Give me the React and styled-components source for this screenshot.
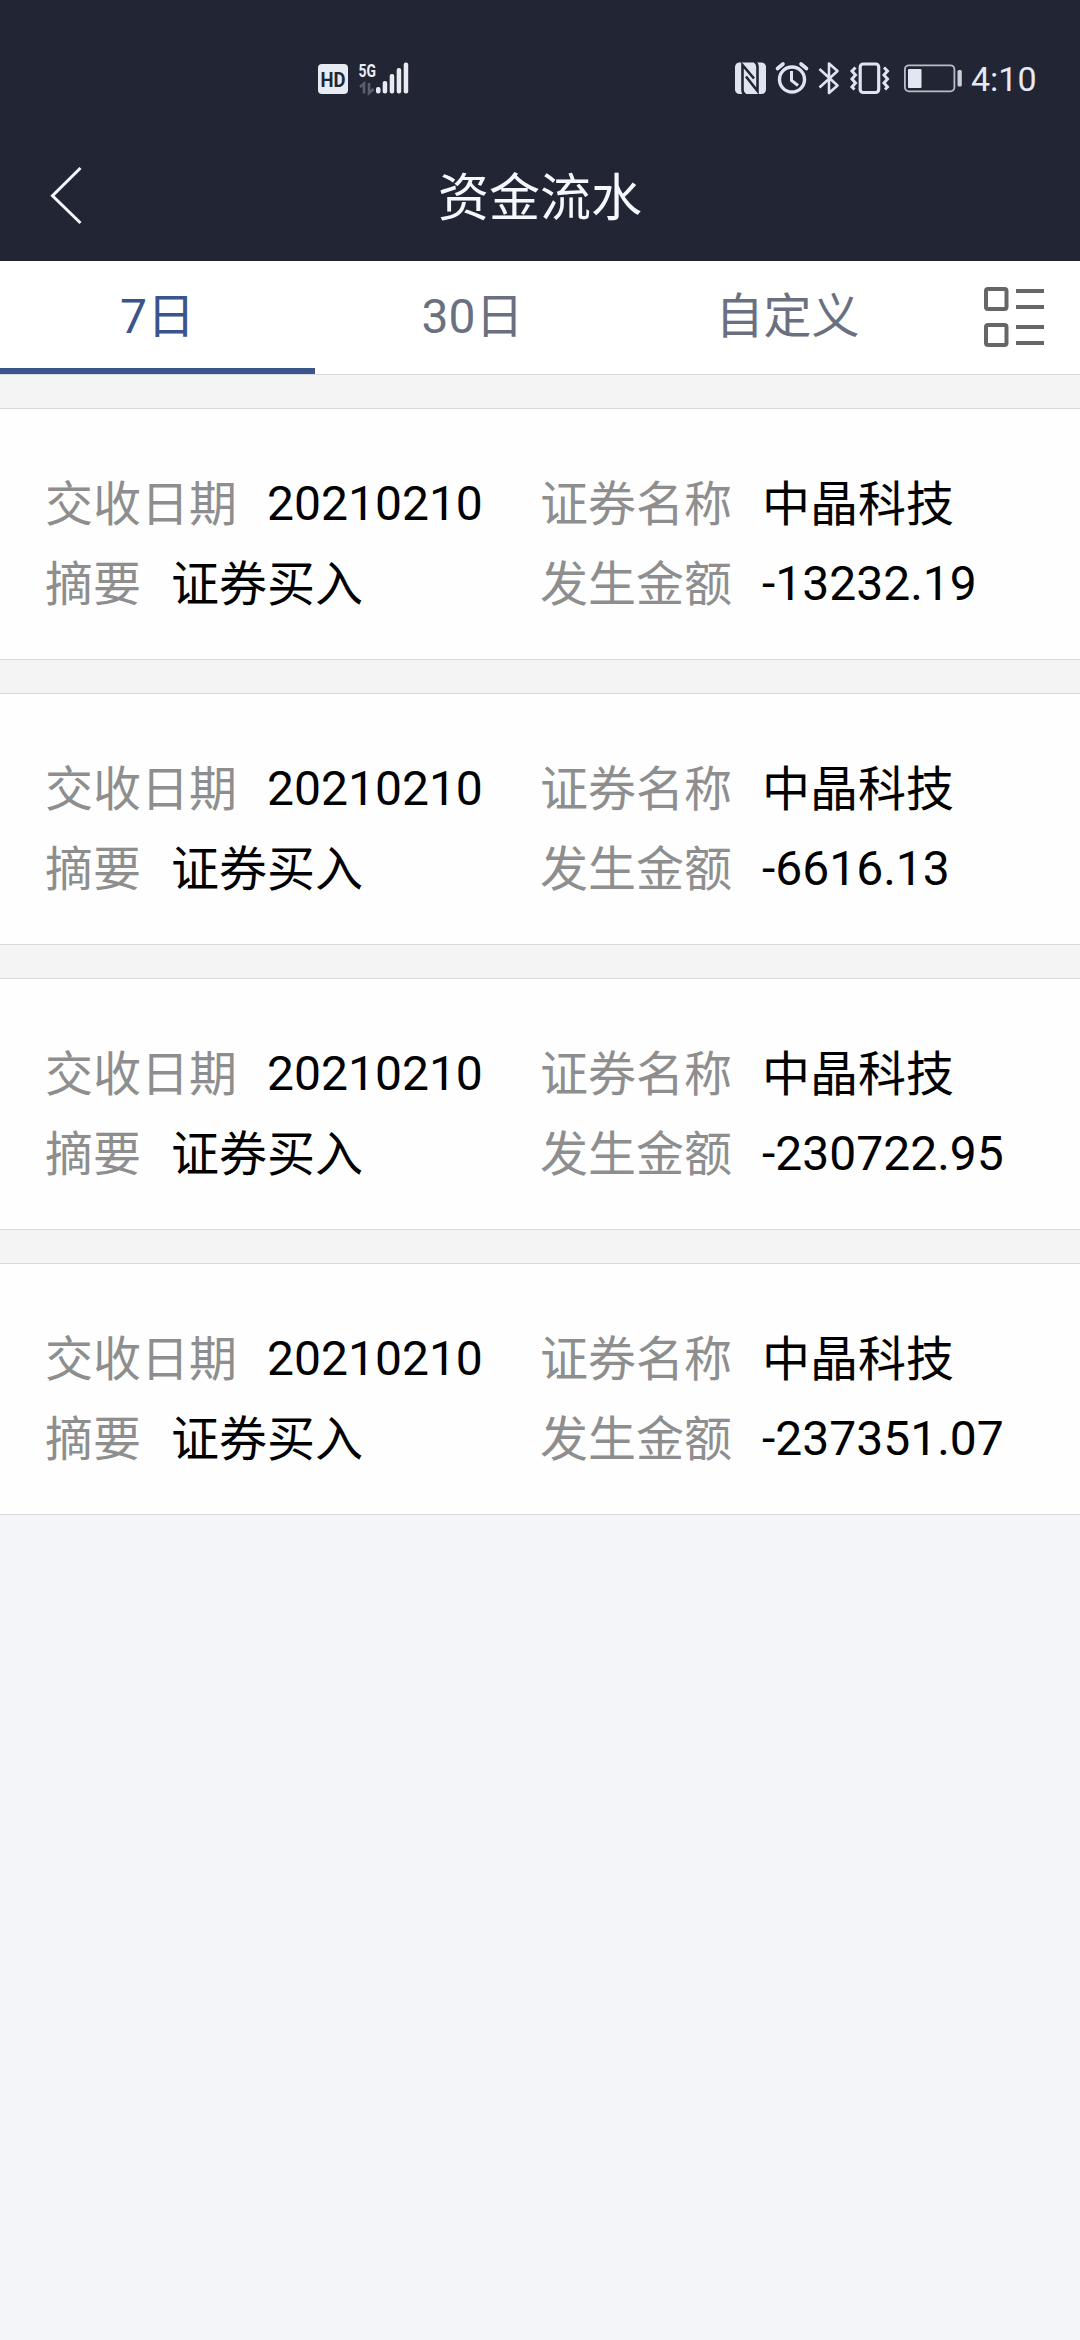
import React from 'react';
import styled, { css, createGlobalStyle } from 'styled-components';

const GlobalStyle = createGlobalStyle`
    * {
        box-sizing: border-box;
    }

    body {
        margin: 0;
        background-color: #f3f5f9;
        font-family: Roboto, "Noto Sans CJK SC", sans-serif;
        -webkit-font-smoothing: antialiased;
    }
`;

const Page = styled.div`
    width: 1080px;
    min-height: 2340px;
    background-color: #f3f5f9;
`;

const TopArea = styled.header`
    height: 261px;
    background-color: #222634;
    color: #f6f8ff;
`;

const StatusBar = styled.div`
    display: flex;
    justify-content: space-between;
    height: 131px;
    padding: 54px 43px 0 312px;
`;

const StatusGroup = styled.div`
    display: flex;
    height: 50px;
`;

const Clock = styled.span`
    width: 66px;
    color: #e6e9f5;
    font-size: 34px;
    line-height: 50px;
    white-space: nowrap;
`;

const TitleBar = styled.div`
    display: grid;
    grid-template-columns: 120px 1fr 120px;
    align-items: start;
    height: 130px;
`;

const BackButton = styled.button`
    display: flex;
    height: 130px;
    padding: 0;
    border: 0;
    background: none;
    color: inherit;
`;

const Title = styled.h1`
    margin: 0;
    padding-top: 3px;
    font-size: 51px;
    font-weight: 400;
    line-height: 130px;
    text-align: center;
`;

const TabBar = styled.nav`
    display: flex;
    height: 114px;
    background-color: #fff;
    border-bottom: 1px solid #d9dadd;
`;

const Tab = styled.button`
    width: 315px;
    height: 113px;
    padding: 5px 0 0;
    border: 0;
    border-bottom: 6px solid transparent;
    background: none;
    color: #6b7080;
    font-family: inherit;
    font-size: 48px;
    line-height: 102px;

    ${props => props.$active && css`
        border-bottom-color: #3b548c;
        color: #3b548c;
    `}
`;

const ListButton = styled.button`
    display: flex;
    flex: 1;
    padding: 0;
    border: 0;
    background: none;
    color: #666;
`;

const RecordList = styled.main`
    display: flex;
    flex-direction: column;
    gap: 33px;
    padding-top: 33px;
    background-color: #f4f4f5;
`;

const Record = styled.section`
    display: grid;
    grid-template-columns: 495px 1fr;
    grid-auto-rows: 80px;
    height: 252px;
    padding: 55px 0 0 45px;
    border-top: 1px solid #d8d8d8;
    border-bottom: 1px solid #d8d8d8;
    background-color: #fefefe;
`;

const Field = styled.div`
    display: flex;
    gap: 30px;
    font-size: 48px;
    line-height: 80px;
    white-space: nowrap;
`;

// Chinese glyphs sit slightly lower than the digits
const Label = styled.span`
    padding-top: 1px;
    color: #8e8e8e;
`;

const Value = styled.span`
    padding-top: ${props => props.$numeric ? 0 : 1}px;
    color: #000;
`;

const tabs = ['7日', '30日', '自定义'];

const records = [
    { date: '20210210', name: '中晶科技', summary: '证券买入', amount: '-13232.19' },
    { date: '20210210', name: '中晶科技', summary: '证券买入', amount: '-6616.13' },
    { date: '20210210', name: '中晶科技', summary: '证券买入', amount: '-230722.95' },
    { date: '20210210', name: '中晶科技', summary: '证券买入', amount: '-237351.07' },
];

// HD badge, 5G label and signal strength
function NetworkIcons() {
    return (
        <svg width="104" height="50" viewBox="312 54 104 50" fill="#e9ebf2">
            <rect x="318" y="64" width="30" height="30" rx="4" />
            <text x="320.5" y="86.5" fill="#222634" fontSize="20" fontWeight="700" textLength="25" lengthAdjust="spacingAndGlyphs">HD</text>
            <text x="358.5" y="77" fontSize="19" fontWeight="700" textLength="17.5" lengthAdjust="spacingAndGlyphs">5G</text>
            <g fill="none" stroke="#5b5f6b" strokeWidth="2.6">
                <path d="M360 87l4-3.500v10" />
                <path d="M369 83v10l4.500-4" />
            </g>
            <rect x="376" y="87" width="4.500" height="6.500" rx="2" />
            <rect x="382.700" y="81" width="4.500" height="12.500" rx="2" />
            <rect x="389.700" y="74" width="4.500" height="19.500" rx="2" />
            <rect x="396.700" y="68" width="4.500" height="25.500" rx="2" />
            <rect x="403.700" y="62.500" width="4.500" height="31" rx="2" />
        </svg>
    );
}

// NFC, alarm, bluetooth, vibrate and battery
function DeviceIcons() {
    return (
        <svg width="242" height="50" viewBox="729 54 242 50" fill="none" stroke="#dfe4f0" strokeWidth="3">
            <rect x="735" y="62.500" width="31" height="31.500" rx="4.500" fill="#dfe4f0" stroke="none" />
            <path d="M745.500 95q-3-1.500-3-5v-25l11.500 13.500M746 76.500l11.500 14.500v-24q0-3.500-3-5.500" stroke="#222634" strokeWidth="2.600" />
            <circle cx="792" cy="79.500" r="12.500" strokeWidth="3.400" />
            <path d="M791.500 71v9.500l6.500 5" />
            <path d="M777.500 68.500l5.500-4.500M806.500 68.500l-5.500-4.500" strokeWidth="3.600" strokeLinecap="round" />
            <path d="M819.500 69l18 16.500-8.500 7.500v-29.500l8.500 7.500-18 16.500" strokeWidth="2.600" strokeLinejoin="round" />
            <rect x="860.200" y="64" width="18.500" height="28.500" rx="3" strokeWidth="3.200" />
            <path d="M855.500 67.500l-3.500 3.500 3.500 4-3.500 4 3.500 4-3.500 4 2.500 2.500M884 67.500l3.500 3.500-3.500 4 3.500 4-3.500 4 3.500 4-2.500 2.500" />
            <rect x="904.900" y="65.300" width="49.500" height="26" rx="4" strokeWidth="1.800" stroke="#b9bdc8" />
            <rect x="908" y="69" width="13.500" height="19" rx="1" fill="#e2e6f1" stroke="none" />
            <rect x="957.500" y="70" width="4.300" height="16.500" rx="1.500" fill="#cbcfda" stroke="none" />
        </svg>
    );
}

function BackIcon() {
    return (
        <svg width="120" height="130" viewBox="0 131 120 130" fill="none" stroke="currentColor" strokeWidth="3">
            <path d="M80.500 168L52.500 195.700L80.500 223" />
        </svg>
    );
}

function ListIcon() {
    return (
        <svg width="135" height="113" viewBox="945 261 135 113" fill="none" stroke="currentColor" strokeWidth="4">
            <rect x="986" y="289" width="20.500" height="20" rx="2" />
            <rect x="986" y="325" width="20.500" height="20" rx="2" />
            <path d="M1016 291h28M1016 307h28M1016 327h28M1016 343h28" />
        </svg>
    );
}

function RecordItem({ record }) {
    return (
        <Record>
            <Field><Label>交收日期</Label><Value $numeric>{record.date}</Value></Field>
            <Field><Label>证券名称</Label><Value>{record.name}</Value></Field>
            <Field><Label>摘要</Label><Value>{record.summary}</Value></Field>
            <Field><Label>发生金额</Label><Value $numeric>{record.amount}</Value></Field>
        </Record>
    );
}

export default class App extends React.Component {
    constructor(props) {
        super(props);

        this.state = {
            tab: 0
        }
    }

    render() {
        return (
            <Page>
                <GlobalStyle />
                <TopArea>
                    <StatusBar>
                        <StatusGroup>
                            <NetworkIcons />
                        </StatusGroup>
                        <StatusGroup>
                            <DeviceIcons />
                            <Clock>4:10</Clock>
                        </StatusGroup>
                    </StatusBar>
                    <TitleBar>
                        <BackButton><BackIcon /></BackButton>
                        <Title>资金流水</Title>
                    </TitleBar>
                </TopArea>
                <TabBar>
                    {tabs.map((label, i) => (
                        <Tab key={label} $active={this.state.tab === i} onClick={() => this.setState({ tab: i })}>
                            {label}
                        </Tab>
                    ))}
                    <ListButton><ListIcon /></ListButton>
                </TabBar>
                <RecordList>
                    {records.map((record, i) => <RecordItem key={i} record={record} />)}
                </RecordList>
            </Page>
        )
    }
}
